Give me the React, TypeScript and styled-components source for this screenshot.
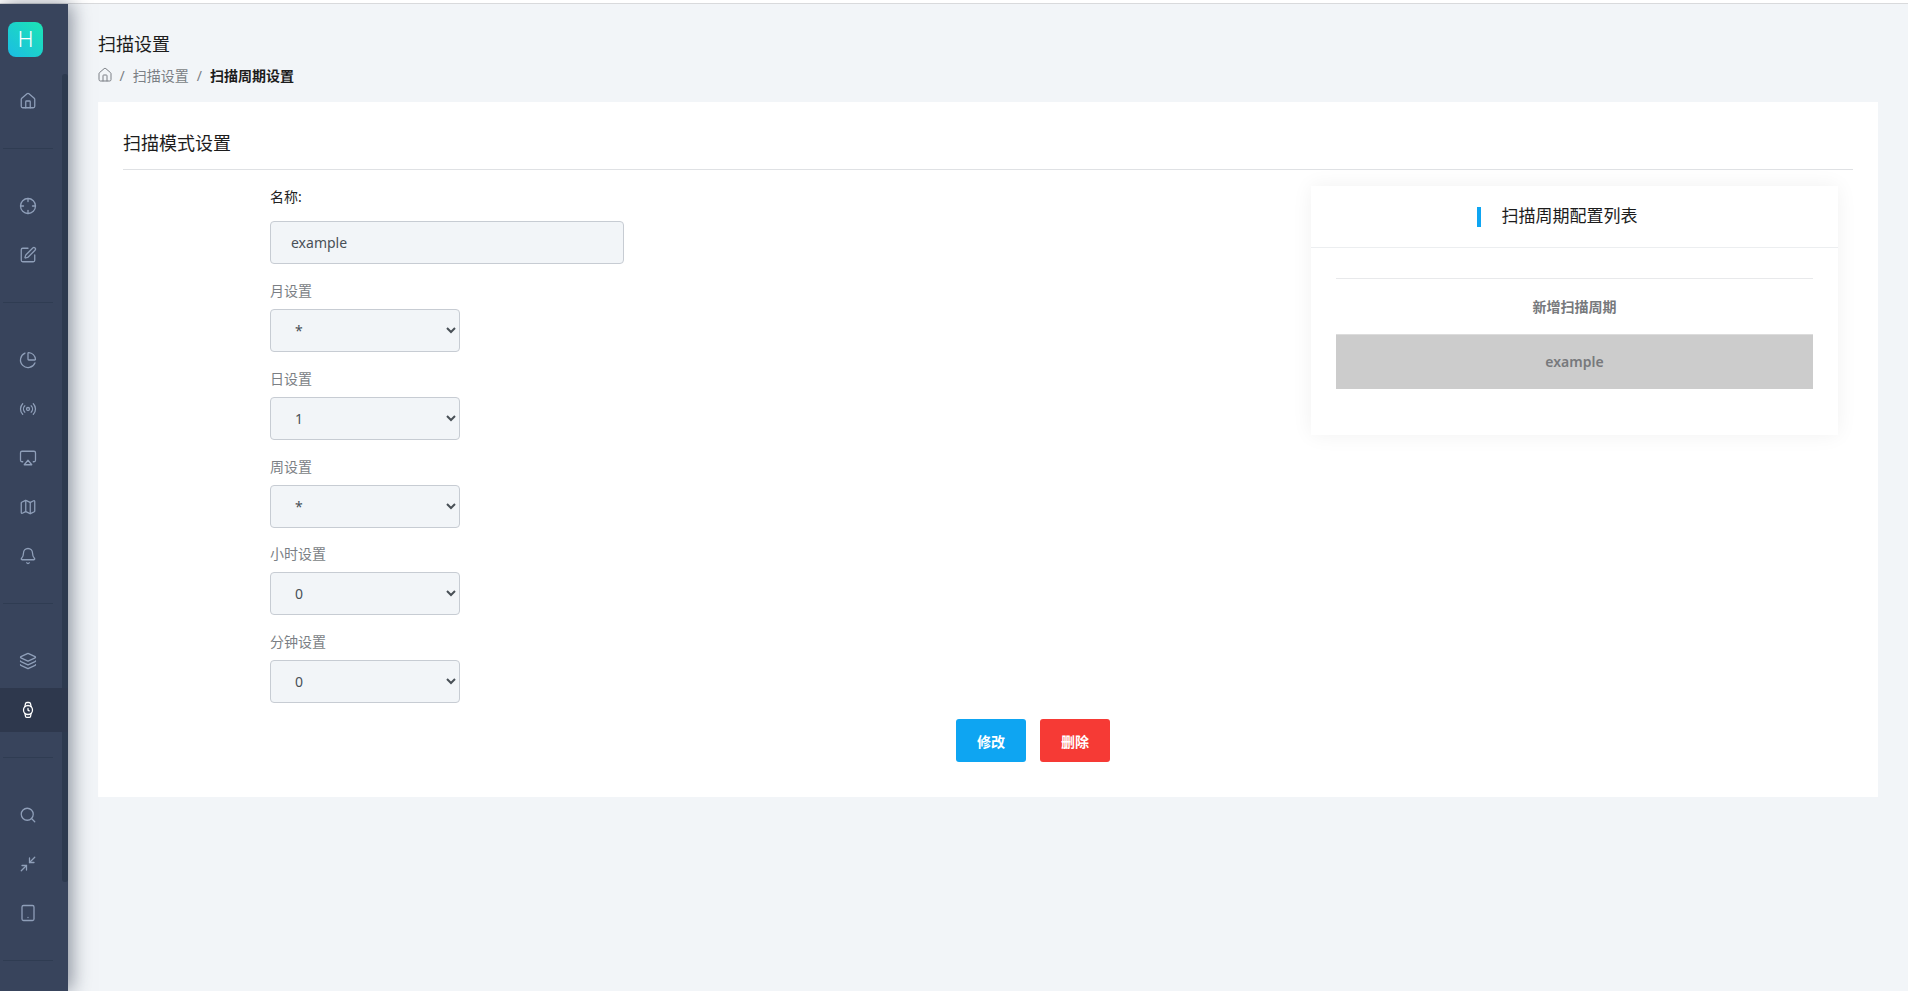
import React from 'react';
import styled, { createGlobalStyle } from 'styled-components';
import {
  Airplay,
  Bell,
  Crosshair,
  House,
  Layers,
  Map,
  Minimize2,
  PieChart,
  Radio,
  Search,
  SquarePen,
  Tablet,
  Watch,
} from 'lucide-react';

const fontStack = `"Noto Sans", "Open Sans", "Noto Sans CJK SC", sans-serif`;

const GlobalStyle = createGlobalStyle`
  html, body {
    margin: 0;
    padding: 0;
    height: 100%;
    overflow: hidden;
    background: #fff;
  }
  #root {
    height: 100%;
  }
  * {
    box-sizing: border-box;
  }
`;

const navGroups = [
  [{ icon: House }],
  [{ icon: Crosshair }, { icon: SquarePen }],
  [{ icon: PieChart }, { icon: Radio }, { icon: Airplay }, { icon: Map }, { icon: Bell }],
  [{ icon: Layers }, { icon: Watch, active: true }],
  [{ icon: Search }, { icon: Minimize2 }, { icon: Tablet }],
];

const selects = [
  { label: '月设置', value: '*' },
  { label: '日设置', value: '1' },
  { label: '周设置', value: '*' },
  { label: '小时设置', value: '0' },
  { label: '分钟设置', value: '0' },
];

export default function App() {
  return (
    <>
      <GlobalStyle />
      <Page>
        <TopLine />
        <Shell>
          <Sidebar>
            <Logo>H</Logo>
            <ScrollThumb />
            {navGroups.map((items, i) => (
              <NavGroup key={i} $first={i === 0}>
                {items.map(({ icon: Icon, active }: any, j: number) => (
                  <NavItem key={j} $active={active}>
                    <Icon size={18} strokeWidth={1.7} />
                  </NavItem>
                ))}
                <NavDivider />
              </NavGroup>
            ))}
          </Sidebar>
          <Main>
            <PageTitle>扫描设置</PageTitle>
            <Breadcrumb>
              <House size={16} strokeWidth={1.5} />
              <Slash>/</Slash>
              <span>扫描设置</span>
              <Slash>/</Slash>
              <strong>扫描周期设置</strong>
            </Breadcrumb>
            <Card>
              <CardTitle>扫描模式设置</CardTitle>
              <CardBody>
                <FormColumn>
                  <NameLabel>名称:</NameLabel>
                  <TextInput defaultValue="example" />
                  {selects.map((s) => (
                    <SelectField key={s.label}>
                      <FieldLabel>{s.label}</FieldLabel>
                      <Select defaultValue={s.value}>
                        <option value={s.value}>{s.value}</option>
                      </Select>
                    </SelectField>
                  ))}
                  <Actions>
                    <ActionButton $color="#0ea5f2">修改</ActionButton>
                    <ActionButton $color="#f63a35">删除</ActionButton>
                  </Actions>
                </FormColumn>
                <ListPanel>
                  <PanelHeader>
                    <PanelTitle>扫描周期配置列表</PanelTitle>
                  </PanelHeader>
                  <PanelBody>
                    <AddRow>新增扫描周期</AddRow>
                    <ListRow>example</ListRow>
                  </PanelBody>
                </ListPanel>
              </CardBody>
            </Card>
          </Main>
        </Shell>
      </Page>
    </>
  );
}

const Page = styled.div`
  height: 991px;
  display: flex;
  flex-direction: column;
  font-family: ${fontStack};
`;

const TopLine = styled.div`
  height: 4px;
  flex: none;
  background: #fff;
  border-bottom: 1px solid #d9dadc;
`;

const Shell = styled.div`
  flex: 1;
  display: flex;
  min-height: 0;
`;

const Sidebar = styled.aside`
  position: relative;
  z-index: 2;
  flex: none;
  width: 68px;
  background: #38445c;
  box-shadow: 4px 0 18px rgba(40, 50, 70, 0.5);
`;

const Logo = styled.div`
  width: 35px;
  height: 35px;
  margin: 18px 0 0 8px;
  border-radius: 8px;
  background: linear-gradient(45deg, #1bbce4, #1ce6b4);
  color: #fff;
  font-family: Roboto, sans-serif;
  font-size: 22px;
  font-weight: 300;
  line-height: 35px;
  text-align: center;
`;

const ScrollThumb = styled.div`
  position: absolute;
  top: 70px;
  left: 62px;
  width: 6px;
  height: 808px;
  border-radius: 3px;
  background: #2d3a4f;
`;

const NavGroup = styled.div<{ $first?: boolean }>`
  display: flex;
  flex-direction: column;
  gap: 5px;
  padding-top: ${(p) => (p.$first ? '22px' : '35px')};
`;

const NavItem = styled.div<{ $active?: boolean }>`
  position: relative;
  z-index: 1;
  height: 44px;
  display: flex;
  align-items: center;
  justify-content: center;
  padding-right: 12px;
  color: ${(p) => (p.$active ? '#ffffff' : '#8f9fb9')};
  background: ${(p) => (p.$active ? '#2e384d' : 'transparent')};
`;

const NavDivider = styled.div`
  width: 50px;
  height: 1px;
  margin: 20px 0 0 3px;
  background: #2f3c52;
`;

const Main = styled.main`
  flex: 1;
  min-width: 0;
  padding: 0 30px;
  background: #f2f5f8;
`;

const PageTitle = styled.h1`
  margin: 28px 0 0;
  color: #1c1c1c;
  font-size: 18px;
  font-weight: 400;
  line-height: 24px;
`;

const Breadcrumb = styled.nav`
  display: flex;
  align-items: center;
  height: 20px;
  margin-top: 9px;
  color: #7b7f85;
  font-size: 14px;
  svg {
    display: block;
    margin: 0 -1.4px 0 -1px;
  }
  strong {
    color: #1c1c1c;
    font-weight: 700;
  }
`;

const Slash = styled.span`
  margin: 0 8px;
`;

const Card = styled.section`
  height: 695px;
  margin-top: 17px;
  padding: 0 25px;
  background: #fff;
`;

const CardTitle = styled.h2`
  height: 68px;
  margin: 0;
  padding-top: 29px;
  border-bottom: 1px solid #dfe1e4;
  color: #1c1c1c;
  font-size: 18px;
  font-weight: 400;
  line-height: 24px;
`;

const CardBody = styled.div`
  display: flex;
  align-items: flex-start;
  padding-right: 15px;
`;

const FormColumn = styled.form`
  flex: 1;
  min-width: 0;
  padding: 17px 0 0 147px;
`;

const NameLabel = styled.label`
  display: block;
  height: 20px;
  margin-bottom: 14px;
  color: #222;
  font-size: 14px;
  line-height: 20px;
`;

const TextInput = styled.input`
  display: block;
  width: 354px;
  height: 43px;
  padding: 0 20px;
  border: 1px solid #c7ccd3;
  border-radius: 4px;
  outline: none;
  background: #f2f5f8;
  color: #495057;
  font-family: ${fontStack};
  font-size: 14px;
`;

const SelectField = styled.div`
  margin-top: 17px;
  & + & {
    margin-top: 16.75px;
  }
`;

const FieldLabel = styled.label`
  display: block;
  height: 20px;
  margin-bottom: 8px;
  color: #7b7f85;
  font-size: 14px;
  line-height: 20px;
`;

const Select = styled.select`
  display: block;
  width: 190px;
  height: 43px;
  padding: 0 20px;
  border: 1px solid #c7ccd3;
  border-radius: 4px;
  outline: none;
  background: #f2f5f8;
  color: #495057;
  font-family: ${fontStack};
  font-size: 14px;
`;

const Actions = styled.div`
  display: flex;
  gap: 14px;
  margin: 16px 0 0 686px;
`;

const ActionButton = styled.button<{ $color: string }>`
  width: 70px;
  height: 43px;
  padding: 0;
  border: none;
  border-radius: 3px;
  background: ${(p) => p.$color};
  color: #fff;
  font-family: ${fontStack};
  font-size: 14px;
  font-weight: 600;
`;

const ListPanel = styled.aside`
  flex: none;
  width: 527px;
  height: 249px;
  margin-top: 16px;
  background: #fff;
  box-shadow: 0 0 20px rgba(0, 0, 0, 0.06);
`;

const PanelHeader = styled.header`
  display: flex;
  justify-content: center;
  height: 62px;
  padding: 20px 35px 0 0;
  border-bottom: 1px solid #eceef0;
`;

const PanelTitle = styled.h3`
  position: relative;
  margin: 0;
  padding-left: 25px;
  color: #1c1c1c;
  font-size: 17px;
  font-weight: 400;
  line-height: 20px;
  &::before {
    content: '';
    position: absolute;
    left: 0;
    top: 1px;
    width: 4px;
    height: 20px;
    background: #0ea5f2;
  }
`;

const PanelBody = styled.div`
  padding: 30px 25px 0;
`;

const AddRow = styled.div`
  height: 56px;
  border-top: 1px solid #e8e9eb;
  color: #77797c;
  font-size: 14px;
  font-weight: 700;
  line-height: 56px;
  text-align: center;
`;

const ListRow = styled.div`
  height: 55px;
  border-top: 1px solid #dcdcdc;
  background: #cccccc;
  color: #77797c;
  font-size: 14px;
  font-weight: 600;
  line-height: 54px;
  text-align: center;
`;
